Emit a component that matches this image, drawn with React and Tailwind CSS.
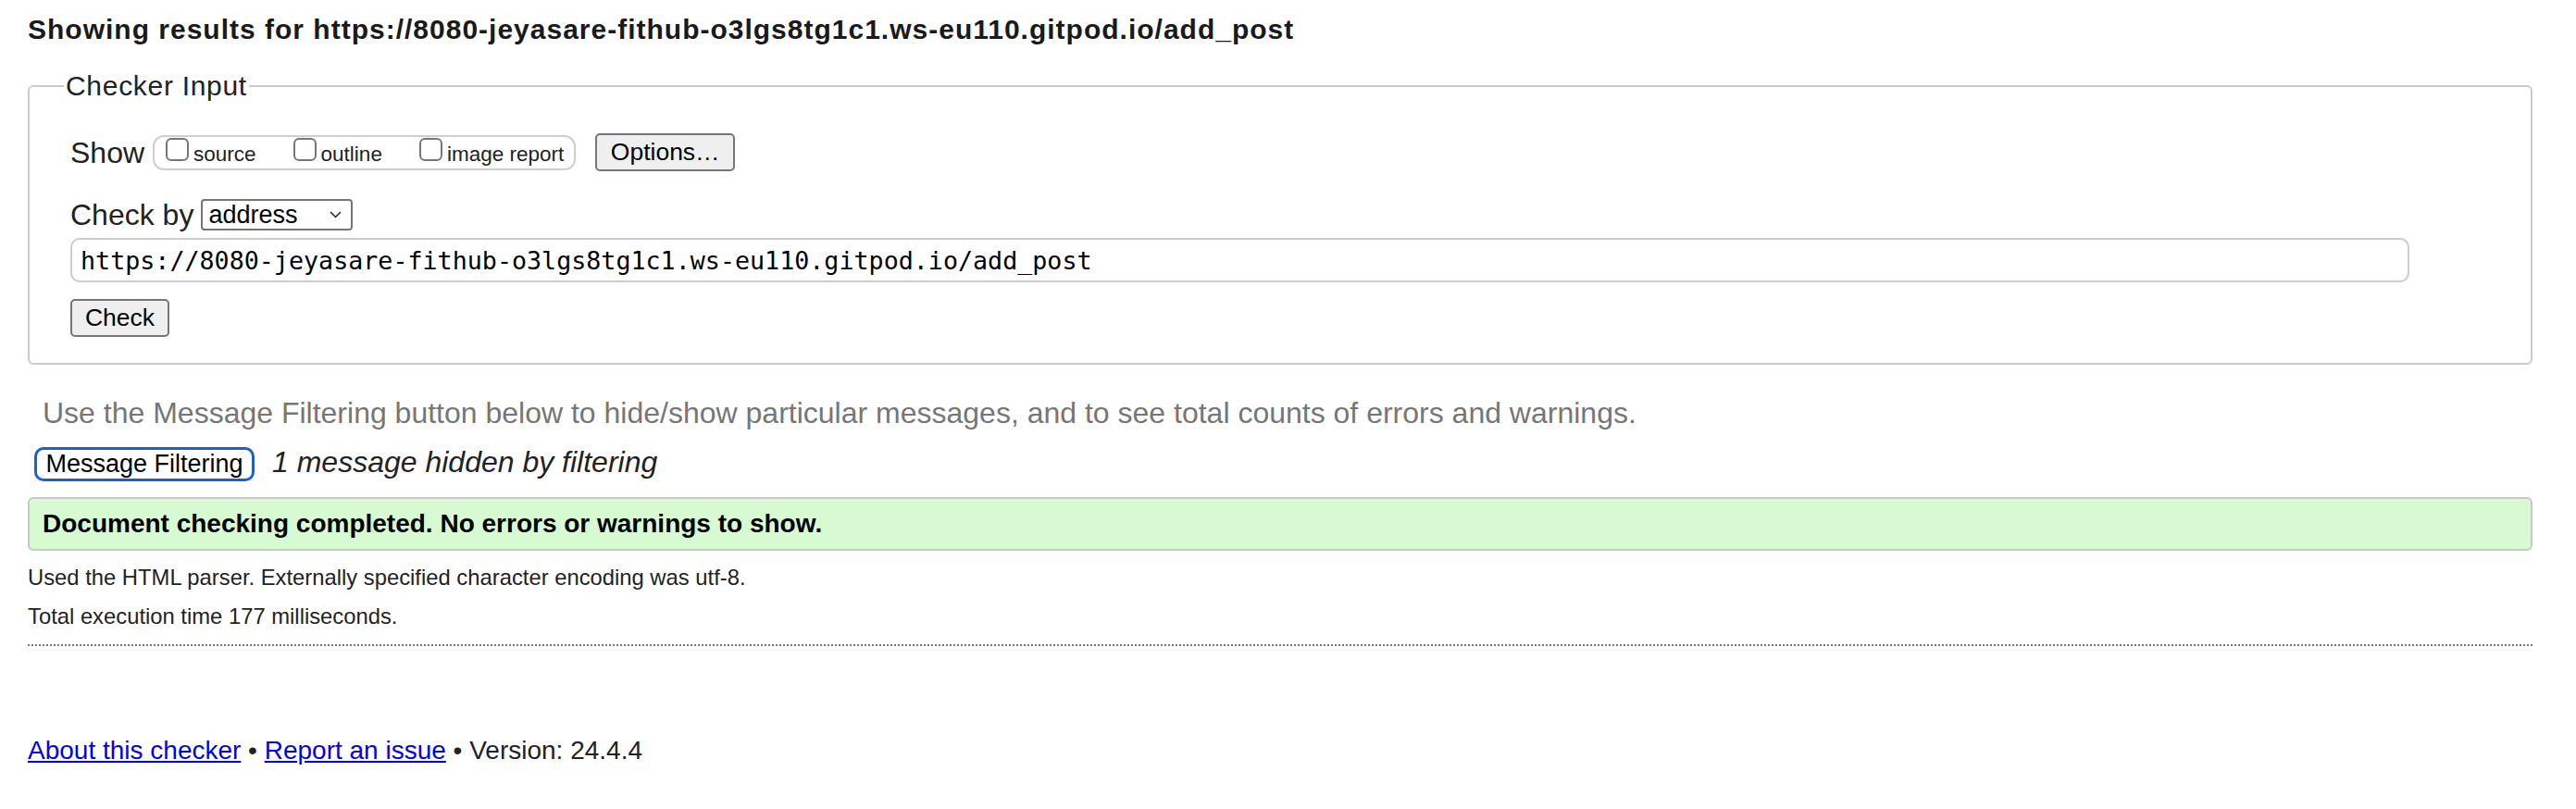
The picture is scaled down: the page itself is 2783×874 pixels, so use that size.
import React from 'react';

const TARGET = 'https://8080-jeyasare-fithub-o3lgs8tg1c1.ws-eu110.gitpod.io/add_post';

function CheckOption({ label, className = '' }) {
  return (
    <label className={`flex items-end ${className}`}>
      <span className="w-[25px] h-[25px] rounded-[6px] border-2 border-[#767676] bg-white" />
      <span className="ml-[5px] -mb-[4px] text-[22.5px] leading-[22px]">{label}</span>
    </label>
  );
}

function GrayButton({ children, className = '' }) {
  return (
    <button
      type="button"
      className={`flex items-center justify-center bg-[#efefef] border-2 border-[#767676] rounded-[5px] leading-none text-black ${className}`}
    >
      {children}
    </button>
  );
}

export default function App() {
  return (
    <div className="min-h-screen bg-white text-[#222] font-['Liberation_Sans',Arial,sans-serif] pl-[30px] pr-[47px] pt-[14px]">
      <h2 className="text-[30px] leading-[36px] font-bold tracking-[1px] text-[#1a1a1a]">Showing results for {TARGET}</h2>

      {/* Checker input */}
      <fieldset className="mt-[25px] border-2 border-[#cbcbcb] rounded-[6px] pl-[44px] pr-[131px] pt-[33px] pb-[28px]">
        <legend className="-ml-[7px] px-[2px] text-[30px] leading-[36px] tracking-[0.7px]">Checker Input</legend>

        <div className="flex items-center h-[41px]">
          <span className="text-[32px] leading-none">Show</span>
          <div className="ml-[9px] h-[38px] flex items-start pt-[1px] pl-[12px] pr-[11px] border-2 border-[#cfcfcf] rounded-[12px]">
            <CheckOption label="source" />
            <CheckOption label="outline" className="ml-[40px]" />
            <CheckOption label="image report" className="ml-[40px]" />
          </div>
          <GrayButton className="ml-[21px] w-[151px] h-[41px] text-[26.5px]">Options…</GrayButton>
        </div>

        <div className="mt-[30px] flex items-center h-[34px]">
          <span className="text-[32px] leading-none">Check by</span>
          <div className="relative ml-[8px] w-[164px] h-[34px]">
            <select
              defaultValue="address"
              className="appearance-none w-full h-full bg-white border-2 border-[#767676] rounded-[4px] pl-[6px] text-[27px] leading-none text-black"
            >
              <option value="address">address</option>
              <option value="file">file upload</option>
              <option value="text">text input</option>
            </select>
            <svg className="absolute right-[12px] top-[13px] pointer-events-none" width="13" height="8" viewBox="0 0 13 8">
              <path d="M1 1 L6.5 6.5 L12 1" fill="none" stroke="#222" strokeWidth="1.5" />
            </svg>
          </div>
        </div>

        <input
          readOnly
          value={TARGET}
          className="mt-[8px] block w-full h-[48px] border-2 border-[#cccccc] rounded-[10px] px-[9px] font-['DejaVu_Sans_Mono',monospace] text-[26.7px] text-black outline-none"
        />

        <GrayButton className="mt-[18px] w-[107px] h-[41px] text-[26.5px]">Check</GrayButton>
      </fieldset>

      <p className="mt-[32px] pl-[16px] text-[32px] leading-[40px] text-[#767676]">
        Use the Message Filtering button below to hide/show particular messages, and to see total counts of errors and warnings.
      </p>

      <div className="mt-[17px] flex items-center h-[37px]">
        <button
          type="button"
          className="ml-[7px] w-[238px] h-[37px] flex items-center justify-center bg-white border-[3px] border-[#1f5fc9] rounded-[10px] text-[27px] leading-none text-black"
        >
          Message Filtering
        </button>
        <span className="ml-[19px] -mt-[6px] text-[32px] leading-none italic">1 message hidden by filtering</span>
      </div>

      <div className="mt-[17px] h-[58px] flex items-center px-[14px] bg-[#d8fad2] border-2 border-[#c8c8c8] rounded-[6px] text-[28px] font-bold text-black">
        Document checking completed. No errors or warnings to show.
      </div>

      <div className="mt-[8px] text-[23.8px] leading-[42px]">
        <p>Used the HTML parser. Externally specified character encoding was utf-8.</p>
        <p>Total execution time 177 milliseconds.</p>
      </div>

      <div className="mt-[9px] border-t-2 border-dotted border-[#777]" />

      <p className="mt-[96px] text-[28px] leading-[34px]">
        <a href="#about" className="text-[#0000ee] underline">About this checker</a>
        {' • '}
        <a href="#report" className="text-[#0000ee] underline">Report an issue</a>
        {' • Version: 24.4.4'}
      </p>
    </div>
  );
}
